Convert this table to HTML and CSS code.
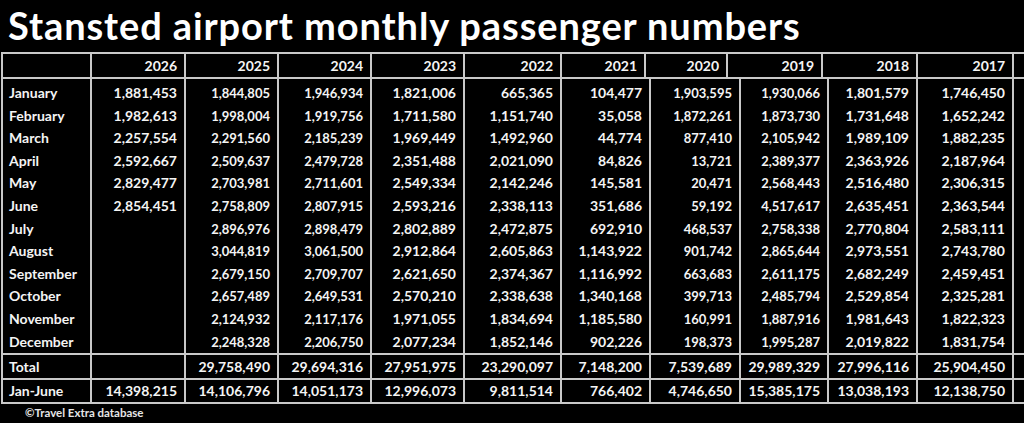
FILE: index.html
```html
<!DOCTYPE html>
<html lang="en">
<head>
<meta charset="utf-8">
<title>Stansted airport monthly passenger numbers</title>
<link rel="stylesheet" href="styles.css">
</head>
<body>
<h1 class="title">Stansted airport monthly passenger numbers</h1>
<div class="table">
  <div class="grid head">
    <div class="c lab"></div><div class="c">2026</div><div class="c">2025</div><div class="c">2024</div><div class="c">2023</div><div class="c">2022</div><div class="c">2021</div><div class="c">2020</div><div class="c">2019</div><div class="c">2018</div><div class="c">2017</div><div class="c"></div>
  </div>
  <div class="grid cols months">
    <div class="row"><div class="c lab">January</div><div class="c">1,881,453</div><div class="c s">1,844,805</div><div class="c s">1,946,934</div><div class="c">1,821,006</div><div class="c">665,365</div><div class="c">104,477</div><div class="c s">1,903,595</div><div class="c s">1,930,066</div><div class="c">1,801,579</div><div class="c">1,746,450</div><div class="c"></div></div>
    <div class="row"><div class="c lab">February</div><div class="c">1,982,613</div><div class="c s">1,998,004</div><div class="c s">1,919,756</div><div class="c">1,711,580</div><div class="c">1,151,740</div><div class="c">35,058</div><div class="c s">1,872,261</div><div class="c s">1,873,730</div><div class="c">1,731,648</div><div class="c">1,652,242</div><div class="c"></div></div>
    <div class="row"><div class="c lab">March</div><div class="c">2,257,554</div><div class="c s">2,291,560</div><div class="c s">2,185,239</div><div class="c">1,969,449</div><div class="c">1,492,960</div><div class="c">44,774</div><div class="c s">877,410</div><div class="c s">2,105,942</div><div class="c">1,989,109</div><div class="c">1,882,235</div><div class="c"></div></div>
    <div class="row"><div class="c lab">April</div><div class="c">2,592,667</div><div class="c s">2,509,637</div><div class="c s">2,479,728</div><div class="c">2,351,488</div><div class="c">2,021,090</div><div class="c">84,826</div><div class="c s">13,721</div><div class="c s">2,389,377</div><div class="c">2,363,926</div><div class="c">2,187,964</div><div class="c"></div></div>
    <div class="row"><div class="c lab">May</div><div class="c">2,829,477</div><div class="c s">2,703,981</div><div class="c s">2,711,601</div><div class="c">2,549,334</div><div class="c">2,142,246</div><div class="c">145,581</div><div class="c s">20,471</div><div class="c s">2,568,443</div><div class="c">2,516,480</div><div class="c">2,306,315</div><div class="c"></div></div>
    <div class="row"><div class="c lab">June</div><div class="c">2,854,451</div><div class="c s">2,758,809</div><div class="c s">2,807,915</div><div class="c">2,593,216</div><div class="c">2,338,113</div><div class="c">351,686</div><div class="c s">59,192</div><div class="c s">4,517,617</div><div class="c">2,635,451</div><div class="c">2,363,544</div><div class="c"></div></div>
    <div class="row"><div class="c lab">July</div><div class="c"></div><div class="c s">2,896,976</div><div class="c s">2,898,479</div><div class="c">2,802,889</div><div class="c">2,472,875</div><div class="c">692,910</div><div class="c s">468,537</div><div class="c s">2,758,338</div><div class="c">2,770,804</div><div class="c">2,583,111</div><div class="c"></div></div>
    <div class="row"><div class="c lab">August</div><div class="c"></div><div class="c s">3,044,819</div><div class="c s">3,061,500</div><div class="c">2,912,864</div><div class="c">2,605,863</div><div class="c">1,143,922</div><div class="c s">901,742</div><div class="c s">2,865,644</div><div class="c">2,973,551</div><div class="c">2,743,780</div><div class="c"></div></div>
    <div class="row"><div class="c lab">September</div><div class="c"></div><div class="c s">2,679,150</div><div class="c s">2,709,707</div><div class="c">2,621,650</div><div class="c">2,374,367</div><div class="c">1,116,992</div><div class="c s">663,683</div><div class="c s">2,611,175</div><div class="c">2,682,249</div><div class="c">2,459,451</div><div class="c"></div></div>
    <div class="row"><div class="c lab">October</div><div class="c"></div><div class="c s">2,657,489</div><div class="c s">2,649,531</div><div class="c">2,570,210</div><div class="c">2,338,638</div><div class="c">1,340,168</div><div class="c s">399,713</div><div class="c s">2,485,794</div><div class="c">2,529,854</div><div class="c">2,325,281</div><div class="c"></div></div>
    <div class="row"><div class="c lab">November</div><div class="c"></div><div class="c s">2,124,932</div><div class="c s">2,117,176</div><div class="c">1,971,055</div><div class="c">1,834,694</div><div class="c">1,185,580</div><div class="c s">160,991</div><div class="c s">1,887,916</div><div class="c">1,981,643</div><div class="c">1,822,323</div><div class="c"></div></div>
    <div class="row"><div class="c lab">December</div><div class="c"></div><div class="c s">2,248,328</div><div class="c s">2,206,750</div><div class="c">2,077,234</div><div class="c">1,852,146</div><div class="c">902,226</div><div class="c s">198,373</div><div class="c s">1,995,287</div><div class="c">2,019,822</div><div class="c">1,831,754</div><div class="c"></div></div>
  </div>
  <div class="grid cols sum">
    <div class="c lab">Total</div><div class="c"></div><div class="c">29,758,490</div><div class="c">29,694,316</div><div class="c">27,951,975</div><div class="c">23,290,097</div><div class="c">7,148,200</div><div class="c">7,539,689</div><div class="c">29,989,329</div><div class="c">27,996,116</div><div class="c">25,904,450</div><div class="c"></div>
  </div>
  <div class="grid cols sum half">
    <div class="c lab">Jan-June</div><div class="c">14,398,215</div><div class="c">14,106,796</div><div class="c">14,051,173</div><div class="c">12,996,073</div><div class="c">9,811,514</div><div class="c">766,402</div><div class="c">4,746,650</div><div class="c">15,385,175</div><div class="c">13,038,193</div><div class="c">12,138,750</div><div class="c"></div>
  </div>
</div>
<p class="credit">©Travel Extra database</p>
</body>
</html>
```

FILE: styles.css
```css
* { box-sizing: border-box; }

html, body {
  margin: 0;
  background: #000;
  overflow: hidden;
}

body {
  width: 1024px;
  height: 423px;
  font-family: Lato, "Liberation Sans", sans-serif;
  font-weight: 700;
  color: #f4f4f4;
  --line: #c9c9c9;
}

.title {
  margin: 0;
  height: 52px;
  padding-left: 8px;
  font-size: 38px;
  letter-spacing: 0.9px;
  line-height: 50px;
  font-weight: 700;
  color: #fff;
  white-space: nowrap;
}

.table {
  width: 1023px;
  margin-left: 1px;
}

.grid {
  display: grid;
  border-left: 2px solid var(--line);
}

.head {
  grid-template-columns: 89px 94px 93px 93px 93px 97px 84px 82px 95px 95px 96px 1fr;
  border-top: 2px solid var(--line);
  border-bottom: 2px solid var(--line);
}

.cols {
  grid-template-columns: 89px 94px 93px 93px 93px 97px 89px 90px 88px 89px 96px 1fr;
}

.row { display: contents; }

.c {
  border-right: 2px solid var(--line);
  text-align: right;
  padding-right: 7px;
  font-size: 14px;
  white-space: nowrap;
}

.c:last-child { border-right: 0; }

.c.lab {
  text-align: left;
  padding-left: 6px;
  padding-right: 0;
}

.c.s { font-size: 13px; }

.head .c { line-height: 23px; }

.months .c { line-height: 22.6px; }
.months .row:first-child .c { padding-top: 3px; }

.months, .sum { border-bottom: 2px solid var(--line); }

.sum .c { line-height: 23px; }
.half .c { line-height: 22px; }

.credit {
  margin: 0;
  padding-left: 25px;
  font-size: 11.5px;
  line-height: 18px;
  color: #e6e6e6;
}
```
